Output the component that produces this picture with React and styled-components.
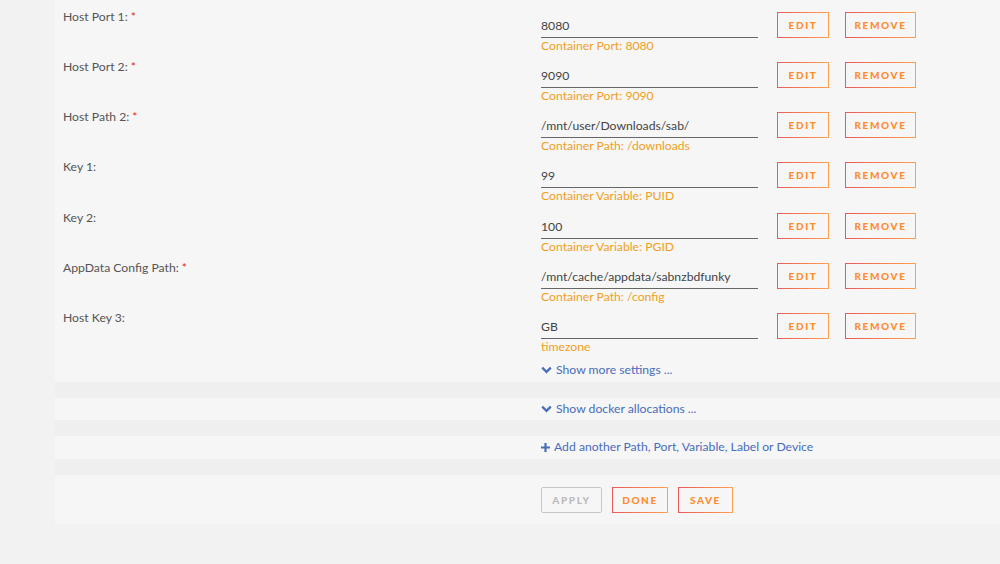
import styled, { createGlobalStyle } from "styled-components";

const GlobalStyle = createGlobalStyle`
  body {
    margin: 0;
    background: #f2f2f2;
    font-family: "Lato", "Noto Sans", sans-serif;
    overflow: hidden;
  }
`;

const Page = styled.div`
  height: 564px;
  padding-left: 55px;
`;

const Stack = styled.div`
  background: #efefef;
  display: flex;
  flex-direction: column;
  gap: 16px;
`;

const Section = styled.div`
  background: #f6f6f6;
  padding: ${(p) => p.$pad || "0"};
`;

const Row = styled.div`
  display: flex;
  align-items: flex-start;
  height: 50.17px;
  padding-left: 8px;
`;

const Label = styled.div`
  width: 478px;
  margin-top: 1px;
  line-height: 20px;
  font-size: 12.2px;
  color: #555;
`;

const Req = styled.span`
  color: #e22828;
  margin-left: 3px;
`;

const Field = styled.div`
  width: 217px;
  margin-top: 6px;
`;

const Value = styled.div`
  box-sizing: border-box;
  height: 26px;
  padding-top: 2px;
  line-height: 23px;
  font-size: 12.2px;
  color: #444;
  border-bottom: 1px solid #666;
`;

const Hint = styled.div`
  line-height: 16px;
  font-size: 12.2px;
  color: #f0a020;
`;

const Actions = styled.div`
  display: flex;
  gap: 16px;
  margin-left: 19px;
  margin-top: 6px;
`;

const Button = styled.button`
  all: unset;
  box-sizing: border-box;
  height: 26px;
  width: ${(p) => p.$w}px;
  display: flex;
  align-items: center;
  justify-content: center;
  font-family: "Lato", sans-serif;
  font-weight: 900;
  font-size: 10px;
  letter-spacing: 1.6px;
  text-transform: uppercase;
  color: ${(p) => (p.$disabled ? "#bbb" : "#ff8c2f")};
  border: 1px solid ${(p) => (p.$disabled ? "#c8c8c8" : "transparent")};
  border-image: ${(p) =>
    p.$disabled ? "none" : "linear-gradient(90deg, #e85a5a 0, #ffa04f) 1"};
  border-radius: 2px;
`;

const LinkLine = styled.div`
  padding-left: 486px;
  line-height: 20px;
  font-size: 12.2px;
  color: #486dba;
  display: flex;
  align-items: center;
  gap: 4px;
`;

const ButtonBar = styled.div`
  padding-left: 486px;
  display: flex;
  gap: 10px;
`;

const Chevron = () => (
  <svg width="11" height="8" viewBox="0 0 11 8">
    <path d="M1.2 1.6 L5.5 5.9 L9.8 1.6" fill="none" stroke="#486dba" strokeWidth="2.2" />
  </svg>
);

const Plus = () => (
  <svg width="9" height="9" viewBox="0 0 9 9">
    <path d="M4.5 0 V9 M0 4.5 H9" stroke="#486dba" strokeWidth="2.2" />
  </svg>
);

const rows = [
  { label: "Host Port 1:", req: true, value: "8080", hint: "Container Port: 8080" },
  { label: "Host Port 2:", req: true, value: "9090", hint: "Container Port: 9090" },
  { label: "Host Path 2:", req: true, value: "/mnt/user/Downloads/sab/", hint: "Container Path: /downloads" },
  { label: "Key 1:", value: "99", hint: "Container Variable: PUID" },
  { label: "Key 2:", value: "100", hint: "Container Variable: PGID" },
  { label: "AppData Config Path:", req: true, value: "/mnt/cache/appdata/sabnzbdfunky", hint: "Container Path: /config" },
  { label: "Host Key 3:", value: "GB", hint: "timezone" },
];

export default function App() {
  return (
    <>
      <GlobalStyle />
      <Page>
        <Stack>
          <Section $pad="6px 0 2px">
            {rows.map((r) => (
              <Row key={r.label}>
                <Label>
                  {r.label}
                  {r.req && <Req>*</Req>}
                </Label>
                <Field>
                  <Value>{r.value}</Value>
                  <Hint>{r.hint}</Hint>
                </Field>
                <Actions>
                  <Button $w={52}>Edit</Button>
                  <Button $w={71}>Remove</Button>
                </Actions>
              </Row>
            ))}
            <LinkLine style={{ marginTop: 3 }}>
              <Chevron />
              Show more settings ...
            </LinkLine>
          </Section>
          <Section $pad="1px 0 1px">
            <LinkLine>
              <Chevron />
              Show docker allocations ...
            </LinkLine>
          </Section>
          <Section $pad="1px 0 2px">
            <LinkLine>
              <Plus />
              Add another Path, Port, Variable, Label or Device
            </LinkLine>
          </Section>
          <Section $pad="12px 0 11px">
            <ButtonBar>
              <Button $w={61} $disabled>Apply</Button>
              <Button $w={56}>Done</Button>
              <Button $w={55}>Save</Button>
            </ButtonBar>
          </Section>
        </Stack>
      </Page>
    </>
  );
}
